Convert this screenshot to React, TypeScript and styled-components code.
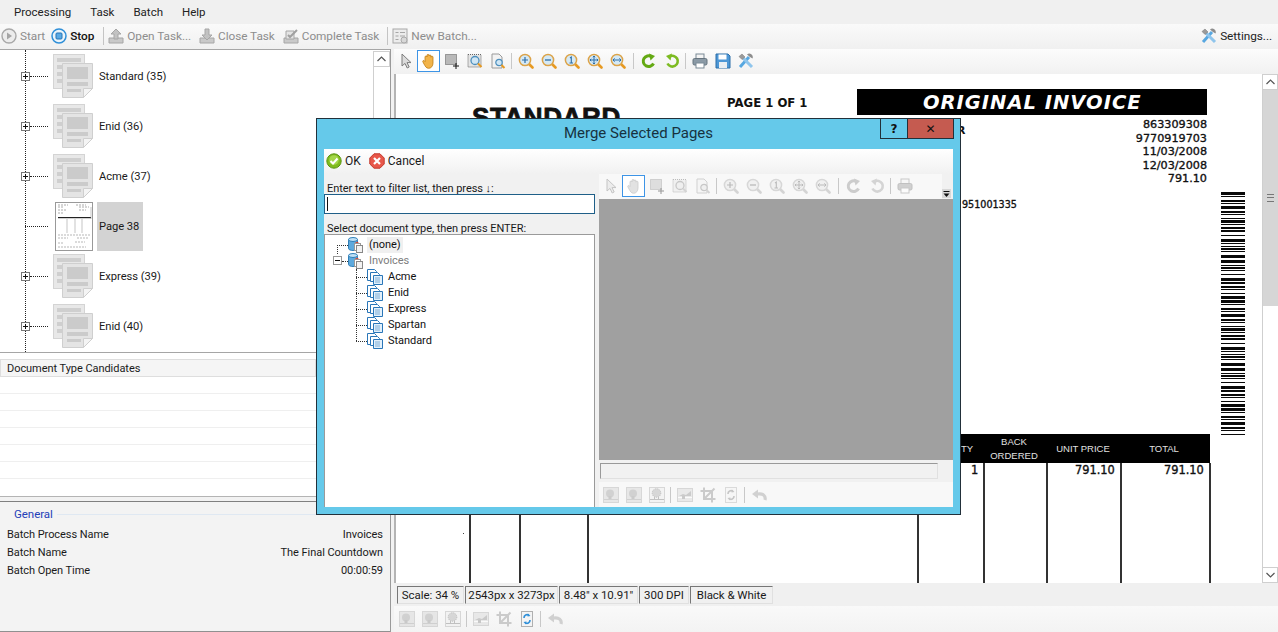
import React from 'react';
import styled, { createGlobalStyle } from 'styled-components';

const GlobalStyle = createGlobalStyle`
  html, body { margin: 0; padding: 0; background: #fff; }
  body { font-family: Roboto, "Liberation Sans", sans-serif; font-size: 11px; letter-spacing: -0.05px; color: #1a1a1a; }
`;

type IconName =
  | 'pointer' | 'hand' | 'select' | 'zoomArea' | 'zoomPage' | 'zoomIn' | 'zoomOut' | 'zoomOne' | 'zoomFit' | 'zoomWidth'
  | 'rotateCw' | 'rotateCcw' | 'print' | 'save' | 'tools' | 'start' | 'stop' | 'openTask' | 'closeTask' | 'completeTask'
  | 'newBatch' | 'ball' | 'ballDots' | 'levels' | 'crop' | 'refreshDoc' | 'undo' | 'ok' | 'cancel';

const Svg = styled.svg<{ $muted?: boolean }>`
  display: block;
  flex: none;
  ${(p) => (p.$muted ? 'filter: grayscale(1) opacity(0.42);' : '')}
`;

const Lens = ({ children }: { children?: React.ReactNode }) => (
  <>
    <line x1="10.5" y1="10.5" x2="14.5" y2="14.5" stroke="#e79a22" strokeWidth="2.6" strokeLinecap="round" />
    <circle cx="7" cy="7" r="5.6" fill="#d4e9f6" stroke="#dca348" strokeWidth="1.5" />
    {children}
  </>
);

const paths: Record<IconName, React.ReactNode> = {
  pointer: <path d="M4 1v12l3-2.6L9.2 15l2-1-2.2-4.4H13z" fill="#dcdcdc" stroke="#7d7d7d" />,
  hand: <path d="M4 8.5V4a1 1 0 0 1 2 0V2.4a1 1 0 0 1 2 0V3a1 1 0 0 1 2 0v1.2a1 1 0 0 1 2 0V10c0 3-1.8 5.300-4.4 5.300C5 15.300 4.200 13 3 11L1.800 8.700c-.5-1 1-1.700 1.600-.8z" fill="#f2b44a" stroke="#c07f17" strokeWidth="0.8" />,
  select: (
    <>
      <rect x="1.5" y="1.5" width="11" height="10" fill="#b9b9b9" stroke="#555" strokeDasharray="1 1" />
      <path d="M12 10v6M9 13h6" stroke="#111" />
    </>
  ),
  zoomArea: (
    <>
      <rect x="1" y="1.5" width="13" height="12.5" fill="#e4e4e4" stroke="#666" strokeDasharray="1 1" />
      <circle cx="8" cy="7.5" r="4" fill="#cfe6f5" stroke="#4d8fbd" strokeWidth="1.3" />
      <line x1="11" y1="10.5" x2="14.5" y2="14" stroke="#e79a22" strokeWidth="2" />
    </>
  ),
  zoomPage: (
    <>
      <path d="M2 1h7l3 3v11H2z" fill="#f2f2f2" stroke="#9a9a9a" />
      <circle cx="9" cy="9.5" r="3.2" fill="#cfe6f5" stroke="#4d8fbd" strokeWidth="1.2" />
      <line x1="11.5" y1="12" x2="14.5" y2="15" stroke="#e79a22" strokeWidth="2" />
    </>
  ),
  zoomIn: <Lens><path d="M4 7h6M7 4v6" stroke="#2c6ea8" strokeWidth="1.2" /></Lens>,
  zoomOut: <Lens><path d="M4 7h6" stroke="#2c6ea8" strokeWidth="1.3" /></Lens>,
  zoomOne: <Lens><path d="M6 5l1.300-1v6M5.500 10h3.500" fill="none" stroke="#2c6ea8" strokeWidth="1.1" /></Lens>,
  zoomFit: <Lens><path d="M7 3v8M3 7h8M5.800 4.200L7 3l1.200 1.200M5.800 9.800L7 11l1.200-1.200M4.200 5.800L3 7l1.200 1.200M9.800 5.800L11 7l-1.200 1.200" fill="none" stroke="#2c6ea8" /></Lens>,
  zoomWidth: <Lens><path d="M3 7h8M4.600 5.300L3 7l1.600 1.700M9.400 5.300L11 7 9.400 8.700" fill="none" stroke="#2c6ea8" /></Lens>,
  rotateCw: (
    <>
      <path d="M12.500 10.500A5.400 5.400 0 1 1 10.500 3.600" fill="none" stroke="#64a913" strokeWidth="3" />
      <path d="M8 0.500l6 2.500-4.500 4.500z" fill="#64a913" />
    </>
  ),
  rotateCcw: (
    <g transform="matrix(-1 0 0 1 16 0)">
      <path d="M12.500 10.500A5.400 5.400 0 1 1 10.500 3.600" fill="none" stroke="#7dbb22" strokeWidth="2.6" />
      <path d="M8 0.500l6 2.500-4.500 4.500z" fill="#7dbb22" />
    </g>
  ),
  print: (
    <>
      <rect x="4" y="1" width="8" height="5" fill="#f4f4f4" stroke="#7a8a96" />
      <rect x="1" y="5.5" width="14" height="6.5" rx="1.5" fill="#8b9aa6" stroke="#66747f" />
      <rect x="4" y="10" width="8" height="5" fill="#fff" stroke="#7a8a96" />
    </>
  ),
  save: (
    <>
      <path d="M1 1h12l2 2v12H1z" fill="#4d97d6" stroke="#2c6ea8" />
      <rect x="3.5" y="1.5" width="8" height="5" fill="#fff" />
      <rect x="4" y="9" width="8" height="6" fill="#e8eef3" />
    </>
  ),
  tools: (
    <>
      <path d="M2 14L11 4" stroke="#57a7e0" strokeWidth="3" />
      <path d="M9 1.500a3.500 3.500 0 0 1 5.500 4L12 4z" fill="#8d8d8d" />
      <path d="M14 14L5 5" stroke="#8fc5ec" strokeWidth="3" />
      <path d="M1 3.500l3-2.500 3 3-3 2.500z" fill="#9a9a9a" stroke="#777" strokeWidth="0.5" />
    </>
  ),
  start: (
    <>
      <circle cx="8" cy="8" r="7" fill="#ececec" stroke="#a8a8a8" strokeWidth="1.4" />
      <path d="M6 4.500L11 8l-5 3.500z" fill="#a5a5a5" />
    </>
  ),
  stop: (
    <>
      <circle cx="8" cy="8" r="7" fill="#eaf4fb" stroke="#2f8fd8" strokeWidth="1.5" />
      <rect x="5" y="5" width="6" height="6" rx="1" fill="#5aa9e4" stroke="#2474b5" />
    </>
  ),
  openTask: (
    <>
      <path d="M1 10h14v5H1z" fill="#c9c9c9" stroke="#a6a6a6" />
      <path d="M8 1l5 5h-3v5H6V6H3z" fill="#c2c2c2" stroke="#a6a6a6" />
    </>
  ),
  closeTask: (
    <>
      <path d="M1 10h14v5H1z" fill="#c9c9c9" stroke="#a6a6a6" />
      <path d="M8 12L3 7h3V1h4v6h3z" fill="#c2c2c2" stroke="#a6a6a6" />
    </>
  ),
  completeTask: (
    <>
      <path d="M1 10h14v5H1z" fill="#c9c9c9" stroke="#a6a6a6" />
      <path d="M3 3h8v8H3z" fill="#e4e4e4" stroke="#a6a6a6" />
      <path d="M5 7l2 2 7-7" fill="none" stroke="#a0a0a0" strokeWidth="2" />
    </>
  ),
  newBatch: (
    <>
      <rect x="1" y="1" width="14" height="14" fill="#ececec" stroke="#a8a8a8" />
      <path d="M3.500 4.500h3M8 4.500h5M3.500 8h3M8 8h5M3.500 11.500h3" stroke="#a6a6a6" />
      <circle cx="12" cy="12" r="3" fill="#d8d8d8" stroke="#aaa" />
    </>
  ),
  ball: (
    <>
      <rect x="0.5" y="0.5" width="15" height="15" fill="#cfcfcf" stroke="#aaa" />
      <circle cx="7" cy="6.5" r="4" fill="#9c9c9c" />
      <rect x="5.5" y="9" width="3" height="4" fill="#8c8c8c" />
      <path d="M1 12.500h14" stroke="#9a9a9a" />
    </>
  ),
  ballDots: (
    <>
      <rect x="0.5" y="0.5" width="15" height="15" fill="#ececec" stroke="#aaa" />
      <circle cx="7.5" cy="6" r="4.3" fill="#aaa" stroke="#666" strokeDasharray="1 1" />
      <path d="M5.500 10v3M9.500 10v3M1 12.500h14" stroke="#777" />
    </>
  ),
  levels: (
    <>
      <rect x="0.5" y="1.5" width="15" height="13" fill="#d4d4d4" stroke="#aaa" />
      <path d="M2 9l4-2 3 1 5-4v5z" fill="#8d8d8d" />
      <path d="M1 10.500h14" stroke="#fff" />
      <rect x="5" y="9" width="3" height="3" fill="#888" />
    </>
  ),
  crop: (
    <path d="M4 0.500V12h11.500M0.500 4H12v11.500M14.500 1.500L4 12" fill="none" stroke="#8e8e8e" strokeWidth="2" />
  ),
  refreshDoc: (
    <>
      <rect x="2.5" y="0.5" width="11" height="15" fill="#f4f4f4" stroke="#b0b0b0" />
      <path d="M5 7a3 3 0 0 1 5-2.500M11 9a3 3 0 0 1-5 2.500" fill="none" stroke="#2f8fd8" strokeWidth="1.6" />
      <path d="M9 2.500l2.500 2.500-3 .5zM7 13.500L4.500 11l3-.5z" fill="#2f8fd8" />
    </>
  ),
  undo: (
    <>
      <path d="M14 13c1-4-2-7-7.500-6" fill="none" stroke="#9c9c9c" strokeWidth="3.2" />
      <path d="M1 7l6-4.500v9z" fill="#9c9c9c" />
    </>
  ),
  ok: (
    <>
      <circle cx="8" cy="8" r="7.2" fill="#7fbb1e" stroke="#5a9412" />
      <circle cx="8" cy="7" r="4.8" fill="#a4d64b" />
      <path d="M4.500 8l2.500 2.500L11.500 5.500" fill="none" stroke="#fff" strokeWidth="2" />
    </>
  ),
  cancel: (
    <>
      <path d="M5 0.800h6L15.200 5v6L11 15.200H5L0.800 11V5z" fill="#e8574a" stroke="#c23a2e" />
      <path d="M5 5l6 6M11 5l-6 6" stroke="#fff" strokeWidth="2.2" />
    </>
  ),
};

const Icon = ({ name, muted }: { name: IconName; muted?: boolean }) => (
  <Svg width={16} height={16} viewBox="0 0 16 16" $muted={muted}>
    {paths[name]}
  </Svg>
);

const Shell = styled.div`
  position: relative;
  width: 1278px;
  height: 632px;
  overflow: hidden;
  background: #f2f2f2;
  display: flex;
  flex-direction: column;
`;

const MenuBar = styled.div`
  height: 24px;
  flex: none;
  display: flex;
  align-items: center;
  gap: 19px;
  padding-left: 14px;
  background: #f0f0f0;
  font-size: 11.5px;
  letter-spacing: 0;
  color: #222;
`;

const MainToolbar = styled.div`
  height: 25px;
  flex: none;
  box-sizing: border-box;
  display: flex;
  align-items: center;
  padding: 0 6px 2px 1px;
  background: linear-gradient(#fafafa, #f0f0f0);
`;

const ToolAction = styled.div<{ $on?: boolean; $after?: number }>`
  display: flex;
  align-items: center;
  gap: 3px;
  margin-right: ${(p) => p.$after ?? 8}px;
  font-size: 11.8px;
  color: ${(p) => (p.$on ? '#111' : '#8d8d8d')};
  font-weight: ${(p) => (p.$on ? 500 : 400)};
`;

const ToolSep = styled.div`
  width: 1px;
  height: 18px;
  flex: none;
  background: #c4c4c4;
  margin: 0 4px 0 0;
`;

const SettingsAction = styled(ToolAction)`
  margin: 0 0 0 auto;
  color: #222;
`;

const Body = styled.div`
  flex: 1;
  display: flex;
  min-height: 0;
`;

const LeftColumn = styled.div`
  width: 390px;
  flex: none;
  display: flex;
  flex-direction: column;
  border-right: 1px solid #9a9a9a;
`;

const TreePanel = styled.div`
  height: 304px;
  flex: none;
  display: flex;
  background: #fff;
  border-top: 1px solid #a6a6a6;
  border-bottom: 1px solid #a6a6a6;
  box-sizing: border-box;
`;

const TreeList = styled.div`
  position: relative;
  flex: 1;
  padding-top: 1px;
  &::before {
    content: '';
    position: absolute;
    left: 25px;
    top: 0;
    bottom: 0;
    border-left: 1px dotted #222;
  }
`;

const TreeRow = styled.div`
  height: 50px;
  display: flex;
  align-items: center;
  padding-left: 21px;
  font-size: 11.2px;
`;

const Expander = styled.div`
  position: relative;
  z-index: 1;
  width: 7px;
  height: 7px;
  border: 1px solid #777;
  background: #fff;
  flex: none;
  &::before { content: ''; position: absolute; left: 1px; right: 1px; top: 3px; height: 1px; background: #111; }
  &::after { content: ''; position: absolute; top: 1px; bottom: 1px; left: 3px; width: 1px; background: #111; }
`;

const Stub = styled.div<{ $wide?: boolean }>`
  width: ${(p) => (p.$wide ? 23 : 18)}px;
  margin-left: ${(p) => (p.$wide ? 4 : 0)}px;
  border-top: 1px dotted #222;
  flex: none;
`;

const ThumbSlot = styled.div`
  width: 46px;
  margin-left: 5px;
  flex: none;
  display: flex;
`;

const PageThumbSlot = styled(ThumbSlot)`
  margin-left: 7px;
  width: 42px;
`;

const TreeLabel = styled.div<{ $selected?: boolean }>`
  height: ${(p) => (p.$selected ? '49px' : 'auto')};
  width: ${(p) => (p.$selected ? '46px' : 'auto')};
  display: flex;
  align-items: center;
  white-space: nowrap;
  background: ${(p) => (p.$selected ? '#d3d3d3' : 'transparent')};
  padding-left: ${(p) => (p.$selected ? '2px' : '0')};
  box-sizing: border-box;
`;

const ScrollTrack = styled.div`
  width: 17px;
  flex: none;
  box-sizing: border-box;
  border-left: 1px solid #cfcfcf;
  display: flex;
  flex-direction: column;
  background: #fff;
`;

const TreeScrollTrack = styled(ScrollTrack)`
  margin-top: 1px;
`;

const ScrollButton = styled.div`
  height: 16px;
  flex: none;
  box-sizing: border-box;
  border: 1px solid #cfcfcf;
  border-left: 0;
  display: flex;
  align-items: center;
  justify-content: center;
  background: #fff;
`;

const ScrollThumb = styled.div`
  height: 216px;
  flex: none;
  background: #d6d6d6;
  display: flex;
  align-items: center;
  justify-content: center;
`;

const Grip = styled.div`
  width: 7px;
  height: 6px;
  border-top: 1px solid #777;
  border-bottom: 1px solid #777;
  position: relative;
  &::after { content: ''; position: absolute; left: 0; right: 0; top: 2px; height: 1px; background: #777; }
`;

const ScrollSpacer = styled.div`
  flex: 1;
`;

const CandidatesPanel = styled.div`
  height: 144px;
  flex: none;
  background: #fff;
  padding-top: 6px;
  box-sizing: border-box;
  border-bottom: 1px solid #b4b4b4;
`;

const CandidatesHeader = styled.div`
  height: 18px;
  width: 316px;
  box-sizing: border-box;
  display: flex;
  align-items: center;
  padding: 1px 0 0 6px;
  background: #f5f5f5;
  border: 1px solid #dedede;
`;

const CandidateRow = styled.div`
  height: 17px;
  box-sizing: border-box;
  border-bottom: 1px solid #efefef;
`;

const GeneralPanel = styled.div`
  flex: 1;
  margin-top: 4px;
  background: #f3f3f3;
  border-top: 1px solid #808080;
  border-bottom: 1px solid #909090;
  padding: 3px 7px 0;
`;

const SectionTitle = styled.div`
  height: 18px;
  display: flex;
  align-items: center;
  gap: 4px;
  padding-left: 7px;
  margin-bottom: 2px;
  color: #2440b8;
  font-size: 11.5px;
  &::after { content: ''; flex: 1; height: 1px; background: #dfe8f2; }
`;

const PropRow = styled.div`
  height: 18px;
  display: flex;
  align-items: center;
  justify-content: space-between;
`;

const RightColumn = styled.div`
  flex: 1;
  min-width: 0;
  display: flex;
  flex-direction: column;
  padding-left: 3px;
`;

const IconBar = styled.div`
  flex: none;
  display: flex;
  align-items: center;
  background: linear-gradient(#fcfcfc, #f1f1f1);
`;

const ViewerBar = styled(IconBar)`
  height: 25px;
  box-sizing: border-box;
  padding-top: 1px;
  align-items: flex-start;
`;

const BottomBar = styled(IconBar)`
  height: 26px;
  padding-left: 1px;
  background: linear-gradient(#f9f9f9, #f3f3f3);
`;

const IconSlot = styled.div<{ $active?: boolean }>`
  width: 23px;
  height: 22px;
  flex: none;
  box-sizing: border-box;
  display: flex;
  align-items: center;
  justify-content: center;
  border: 1px solid ${(p) => (p.$active ? '#3d94e6' : 'transparent')};
  background: ${(p) => (p.$active ? '#fff' : 'transparent')};
`;

const IconSep = styled.div<{ $wide?: boolean }>`
  width: 1px;
  height: 16px;
  margin: ${(p) => (p.$wide ? '3px 3.5px' : '3px 2px')};
  flex: none;
  background: #c8c8c8;
`;

const ViewerRow = styled.div`
  flex: 1;
  min-height: 0;
  display: flex;
  border-left: 2px solid #b4b4b4;
`;

const DocCanvas = styled.div`
  position: relative;
  flex: 1;
  overflow: hidden;
  background: #fff;
  color: #111;
  letter-spacing: 0;
  font-family: "DejaVu Sans", sans-serif;
`;

const DocText = styled.div<{ $x: number; $y: number; $size: number }>`
  position: absolute;
  left: ${(p) => p.$x}px;
  top: ${(p) => p.$y}px;
  font-size: ${(p) => p.$size}px;
  line-height: 1;
  white-space: nowrap;
  -webkit-text-stroke: 0.35px #111;
`;

const DocTitle = styled(DocText)`
  font-family: "Liberation Sans", sans-serif;
  font-weight: 700;
  letter-spacing: 0.6px;
  -webkit-text-stroke: 0.8px #111;
`;

const DocCaption = styled(DocText)`
  font-weight: 700;
  -webkit-text-stroke: 0;
`;

const InvoiceBanner = styled.div`
  position: absolute;
  left: 461px;
  top: 15px;
  width: 350px;
  height: 26px;
  background: #000;
  color: #fff;
  font-size: 19.5px;
  font-weight: 700;
  font-style: italic;
  letter-spacing: 1px;
  display: flex;
  align-items: center;
  padding-left: 66px;
  box-sizing: border-box;
`;

const DocNumbers = styled.div`
  position: absolute;
  left: 691px;
  top: 44px;
  width: 120px;
  text-align: right;
  font-size: 11.2px;
  line-height: 13.5px;
  -webkit-text-stroke: 0.35px #111;
`;

const TableHead = styled.div`
  position: absolute;
  left: 560px;
  top: 360px;
  width: 254px;
  height: 29px;
  background: #000;
  color: #e0e0e0;
  font-family: "Liberation Sans", sans-serif;
  font-size: 9.5px;
  line-height: 14px;
  text-align: center;
`;

const HeadCell = styled.div<{ $x: number; $w: number }>`
  position: absolute;
  left: ${(p) => p.$x}px;
  width: ${(p) => p.$w}px;
  top: 0;
  bottom: 0;
  display: flex;
  align-items: center;
  justify-content: center;
`;

const RuleLine = styled.div<{ $x: number; $y: number }>`
  position: absolute;
  left: ${(p) => p.$x}px;
  top: ${(p) => p.$y}px;
  bottom: 0;
  width: 2px;
  background: #333;
`;

const ViewerScroll = styled(ScrollTrack)`
  width: 16px;
`;

const StatusBar = styled.div`
  height: 23px;
  flex: none;
  display: flex;
  align-items: center;
  padding-left: 3px;
  gap: 1px;
  background: #f0f0f0;
  font-size: 11.5px;
`;

const StatusCell = styled.div<{ $w: number }>`
  width: ${(p) => p.$w}px;
  height: 18px;
  box-sizing: border-box;
  display: flex;
  align-items: center;
  justify-content: center;
  white-space: nowrap;
  border: 1px solid #e0e0e0;
  border-left-color: #777;
  border-top-color: #777;
`;

const Dialog = styled.div`
  position: absolute;
  left: 316px;
  top: 118px;
  width: 645px;
  height: 397px;
  box-sizing: border-box;
  border: 1px solid #22303a;
  background: #65c9ea;
  display: flex;
  flex-direction: column;
  padding: 0 7px 7px;
`;

const TitleBar = styled.div`
  position: relative;
  height: 30px;
  flex: none;
  box-sizing: border-box;
  display: flex;
  align-items: center;
  justify-content: center;
  font-size: 15px;
  letter-spacing: 0;
  color: #17323f;
  padding-bottom: 2px;
`;

const CaptionButtons = styled.div`
  position: absolute;
  right: -1px;
  top: 0;
  display: flex;
`;

const CaptionButton = styled.div<{ $close?: boolean }>`
  width: ${(p) => (p.$close ? 46 : 28)}px;
  height: 20px;
  box-sizing: border-box;
  border: 1px solid #22303a;
  border-top: 0;
  border-left-width: ${(p) => (p.$close ? 0 : 1)}px;
  background: ${(p) => (p.$close ? '#c55b50' : 'transparent')};
  display: flex;
  align-items: center;
  justify-content: center;
  font-family: "DejaVu Sans", sans-serif;
  font-size: 12px;
  font-weight: 700;
  color: #111;
`;

const DialogClient = styled.div`
  flex: 1;
  min-height: 0;
  background: #f1f1f1;
  display: flex;
  flex-direction: column;
`;

const DialogActions = styled.div`
  height: 25px;
  flex: none;
  box-sizing: border-box;
  display: flex;
  align-items: center;
  gap: 8px;
  padding: 0 0 2px 2px;
  background: linear-gradient(#fff, #f1f1f1);
  font-size: 12px;
  letter-spacing: 0;
`;

const DialogAction = styled.div`
  display: flex;
  align-items: center;
  gap: 3px;
`;

const DialogColumns = styled.div`
  flex: 1;
  min-height: 0;
  display: flex;
`;

const DialogLeft = styled.div`
  width: 271px;
  flex: none;
  display: flex;
  flex-direction: column;
`;

const FieldLabel = styled.div`
  height: 20px;
  flex: none;
  display: flex;
  align-items: flex-end;
  padding-left: 3px;
  line-height: 11px;
`;

const FilterInput = styled.div`
  height: 20px;
  flex: none;
  box-sizing: border-box;
  border: 1px solid #1f5f88;
  background: #fff;
  padding: 2px;
  &::before { content: ''; display: block; width: 1px; height: 14px; background: #111; }
`;

const TypeTree = styled.div`
  flex: 1;
  box-sizing: border-box;
  border: 1px solid #9a9a9a;
  border-bottom: 0;
  background: #fff;
  padding-top: 2px;
`;

const TypeRow = styled.div<{ $indent: number }>`
  position: relative;
  height: 16px;
  display: flex;
  align-items: center;
  padding-left: ${(p) => p.$indent}px;
  white-space: nowrap;
`;

const TypeLabel = styled.div<{ $dim?: boolean; $hover?: boolean; $gap: number }>`
  margin-left: ${(p) => p.$gap}px;
  padding: 0 2px;
  height: 16px;
  line-height: 16px;
  color: ${(p) => (p.$dim ? '#7d7d7d' : '#111')};
  background: ${(p) => (p.$hover ? '#f0f0f0' : 'transparent')};
`;

const Guide = styled.div<{ $x: number; $y: number; $w?: number; $h?: number }>`
  position: absolute;
  left: ${(p) => p.$x}px;
  top: ${(p) => p.$y}px;
  ${(p) => (p.$w ? `width: ${p.$w}px; border-top: 1px dotted #333;` : '')}
  ${(p) => (p.$h ? `height: ${p.$h}px; border-left: 1px dotted #333;` : '')}
`;

const CollapseBox = styled(Expander)`
  position: absolute;
  left: 8px;
  top: 3px;
  border-color: #999;
  &::after { display: none; }
`;

const DialogRight = styled.div`
  flex: 1;
  min-width: 0;
  display: flex;
  flex-direction: column;
  padding-left: 4px;
`;

const PreviewBarRow = styled.div`
  height: 25px;
  flex: none;
  display: flex;
  align-items: stretch;
`;

const PreviewBar = styled(IconBar)`
  flex: 1;
  box-sizing: border-box;
  padding-top: 1px;
  align-items: flex-start;
  background: #f8f8f8;
`;

const Overflow = styled.div`
  width: 11px;
  flex: none;
  background: #f1f1f1;
  display: flex;
  align-items: flex-end;
  padding-bottom: 1px;
`;

const PreviewPane = styled.div`
  flex: 1;
  min-height: 0;
  background: #a0a0a0;
`;

const PreviewStatus = styled.div`
  height: 22px;
  flex: none;
  padding: 3px 15px 3px 1px;
  box-sizing: border-box;
  &::before {
    content: '';
    display: block;
    height: 16px;
    box-sizing: border-box;
    border: 1px solid #e0e0e0;
    border-left-color: #999;
    border-top-color: #999;
  }
`;

const PreviewTools = styled(IconBar)`
  height: 25px;
  background: #f8f8f8;
`;

const Chevron = ({ up }: { up?: boolean }) => (
  <Svg width={9} height={6} viewBox="0 0 9 6">
    <path d={up ? 'M0.5 5L4.5 1l4 4' : 'M0.5 1l4 4 4-4'} fill="none" stroke="#555" strokeWidth="1.2" />
  </Svg>
);

const OverflowGlyph = () => (
  <Svg width={9} height={9} viewBox="0 0 9 9">
    <rect width="9" height="9" fill="#d8d8d8" />
    <path d="M1.5 2.5h6" stroke="#111" />
    <path d="M1.5 4.5h6L4.5 8z" fill="#111" />
  </Svg>
);

const StackIcon = () => (
  <Svg width={40} height={44} viewBox="0 0 40 44">
    <rect x="0.5" y="0.5" width="31" height="34" fill="#e8e8e8" stroke="#d4d4d4" />
    <path d="M4 4h24v4H4zM4 11h5v4H4zM4 18h5v4H4zM4 25h5v4H4z" fill="#cfcfcf" />
    <path d="M9.5 9.5h30v25l-9 9h-21z" fill="#e4e4e4" stroke="#cfcfcf" />
    <path d="M14 13h21v12H14zM14 28h21v4H14zM14 35h14v3H14z" fill="#cbcbcb" />
    <path d="M30.5 43.5v-9h9z" fill="#f4f4f4" stroke="#cfcfcf" />
  </Svg>
);

const PageThumb = () => (
  <Svg width={38} height={49} viewBox="0 0 38 49">
    <rect x="0.5" y="0.5" width="37" height="48" fill="#fff" stroke="#999" />
    <path d="M3 3h10M3 5h6M3 8h8M3 11h6M21 3h10M24 5h10M24 8h7" stroke="#888" strokeWidth="0.7" strokeDasharray="2 1" />
    <rect x="3" y="15" width="33" height="1.2" fill="#222" />
    <path d="M12 17v14M20 17v14M27 17v14M36 5v12" stroke="#888" strokeWidth="0.5" />
    <path d="M3 33h33M3 36h10M22 36h12M3 41h6M20 40h10M3 45h28" stroke="#999" strokeWidth="0.7" strokeDasharray="2 1" />
  </Svg>
);

const DbIcon = () => (
  <Svg width={15} height={16} viewBox="0 0 15 16">
    <path d="M0.5 2.5v9c0 1 2 2 4.500 2s4.500-1 4.500-2v-9" fill="#5da9dd" stroke="#2f7fb8" />
    <ellipse cx="5" cy="2.5" rx="4.5" ry="2" fill="#bfe0f5" stroke="#2f7fb8" />
    <path d="M7 6l2-1.500L11 6z" fill="#d84a3a" />
    <rect x="6.5" y="6.5" width="6" height="7" fill="#fff" stroke="#999" />
    <rect x="8.5" y="8.5" width="6" height="7" fill="#f2f2f2" stroke="#888" />
  </Svg>
);

const DocsIcon = () => (
  <Svg width={16} height={16} viewBox="0 0 16 16">
    <path d="M0.5 0.5h7l2 2v9h-9z" fill="#fff" stroke="#2a76b8" />
    <path d="M3.5 3.5h7l2 2v7h-9z" fill="#fff" stroke="#2a76b8" />
    <path d="M6.5 6.5h9v9h-9z" fill="#e2f0fb" stroke="#2a76b8" />
    <path d="M8 9h5M8 11h5M8 13h5" stroke="#7eaed6" />
  </Svg>
);

// rough scanline pattern of the stripe printed on the right side of the page
const barHeights = [3, 1, 2, 1, 3, 2, 1, 1, 3, 1, 2, 2, 1, 3, 1, 1, 2, 1, 3, 3, 1, 2, 1, 1, 3, 2, 2, 1, 1, 3];

const BarcodeSvg = styled.svg`
  position: absolute;
  left: 825px;
  top: 118px;
`;

const Barcode = () => {
  const bars: React.ReactElement[] = [];
  let y = 0;
  let i = 0;
  while (y < 243) {
    const h = barHeights[i % barHeights.length];
    bars.push(<rect key={i} x="0" y={y} width="24" height={h} fill="#0a0a0a" />);
    y += h + barHeights[(i + 7) % barHeights.length];
    i += 1;
  }
  return (
    <BarcodeSvg width={24} height={243} viewBox="0 0 24 243">
      {bars}
    </BarcodeSvg>
  );
};

const DocMark = styled.div`
  position: absolute;
  left: 67px;
  top: 459px;
  width: 1px;
  height: 1px;
  background: #444;
`;

const IconGroup = ({ groups, muted, active }: { groups: IconName[][]; muted?: boolean; active?: IconName }) => (
  <>
    {groups.map((group, i) => (
      <React.Fragment key={i}>
        {i > 0 && <IconSep $wide={i === 2} />}
        {group.map((name) => (
          <IconSlot key={name} $active={name === active}>
            <Icon name={name} muted={muted} />
          </IconSlot>
        ))}
      </React.Fragment>
    ))}
  </>
);

const viewerGroups: IconName[][] = [
  ['pointer', 'hand', 'select', 'zoomArea', 'zoomPage'],
  ['zoomIn', 'zoomOut', 'zoomOne', 'zoomFit', 'zoomWidth'],
  ['rotateCw', 'rotateCcw'],
  ['print', 'save', 'tools'],
];

const previewGroups: IconName[][] = [
  ['pointer', 'hand', 'select', 'zoomArea', 'zoomPage'],
  ['zoomIn', 'zoomOut', 'zoomOne', 'zoomFit', 'zoomWidth'],
  ['rotateCw', 'rotateCcw'],
  ['print'],
];

const EditTools = ({ live }: { live?: boolean }) => (
  <>
    <IconSlot><Icon name="ball" muted /></IconSlot>
    <IconSlot><Icon name="ball" muted /></IconSlot>
    <IconSlot><Icon name="ballDots" muted /></IconSlot>
    <IconSep />
    <IconSlot><Icon name="levels" muted /></IconSlot>
    <IconSlot><Icon name="crop" muted /></IconSlot>
    <IconSlot><Icon name="refreshDoc" muted={!live} /></IconSlot>
    <IconSep />
    <IconSlot><Icon name="undo" muted /></IconSlot>
  </>
);

const treeRows = [
  { label: 'Standard (35)' },
  { label: 'Enid (36)' },
  { label: 'Acme (37)' },
  { label: 'Page 38', page: true },
  { label: 'Express (39)' },
  { label: 'Enid (40)' },
];

const docTypes = ['Acme', 'Enid', 'Express', 'Spartan', 'Standard'];

const props = [
  ['Batch Process Name', 'Invoices'],
  ['Batch Name', 'The Final Countdown'],
  ['Batch Open Time', '00:00:59'],
];

const statusCells: [string, number][] = [
  ['Scale: 34 %', 67],
  ['2543px x 3273px', 93],
  ['8.48" x 10.91"', 79],
  ['300 DPI', 50],
  ['Black & White', 83],
];

const App: React.FC = () => {
  return (
    <Shell>
      <GlobalStyle />
      <MenuBar>
        <span>Processing</span>
        <span>Task</span>
        <span>Batch</span>
        <span>Help</span>
      </MenuBar>
      <MainToolbar>
        <ToolAction $after={6}><Icon name="start" />Start</ToolAction>
        <ToolAction $on $after={9}><Icon name="stop" />Stop</ToolAction>
        <ToolSep />
        <ToolAction><Icon name="openTask" />Open Task...</ToolAction>
        <ToolAction><Icon name="closeTask" />Close Task</ToolAction>
        <ToolAction><Icon name="completeTask" />Complete Task</ToolAction>
        <ToolSep />
        <ToolAction><Icon name="newBatch" />New Batch...</ToolAction>
        <SettingsAction><Icon name="tools" />Settings...</SettingsAction>
      </MainToolbar>
      <Body>
        <LeftColumn>
          <TreePanel>
            <TreeList>
              {treeRows.map((row) => (
                <TreeRow key={row.label}>
                  {row.page ? <Stub $wide /> : <Expander />}
                  {!row.page && <Stub />}
                  {row.page ? (
                    <PageThumbSlot><PageThumb /></PageThumbSlot>
                  ) : (
                    <ThumbSlot><StackIcon /></ThumbSlot>
                  )}
                  <TreeLabel $selected={row.page}>{row.label}</TreeLabel>
                </TreeRow>
              ))}
            </TreeList>
            <TreeScrollTrack>
              <ScrollButton><Chevron up /></ScrollButton>
            </TreeScrollTrack>
          </TreePanel>
          <CandidatesPanel>
            <CandidatesHeader>Document Type Candidates</CandidatesHeader>
            <CandidateRow />
            <CandidateRow />
            <CandidateRow />
            <CandidateRow />
            <CandidateRow />
            <CandidateRow />
          </CandidatesPanel>
          <GeneralPanel>
            <SectionTitle>General</SectionTitle>
            {props.map(([name, value]) => (
              <PropRow key={name}>
                <span>{name}</span>
                <span>{value}</span>
              </PropRow>
            ))}
          </GeneralPanel>
        </LeftColumn>
        <RightColumn>
          <ViewerBar>
            <IconGroup groups={viewerGroups} active="hand" />
          </ViewerBar>
          <ViewerRow>
            <DocCanvas>
              <DocTitle $x={76} $y={30} $size={26}>STANDARD</DocTitle>
              <DocCaption $x={331} $y={24} $size={11.7}>PAGE 1 OF 1</DocCaption>
              <InvoiceBanner>ORIGINAL INVOICE</InvoiceBanner>
              <DocNumbers>
                863309308<br />9770919703<br />11/03/2008<br />12/03/2008<br />791.10
              </DocNumbers>
              <DocCaption $x={561} $y={51} $size={11}>R</DocCaption>
              <DocText $x={566} $y={126} $size={9.6}>951001335</DocText>
              <Barcode />
              <TableHead>
                <HeadCell $x={5} $w={12}>TY</HeadCell>
                <HeadCell $x={27} $w={62}>BACK<br />ORDERED</HeadCell>
                <HeadCell $x={91} $w={72}>UNIT PRICE</HeadCell>
                <HeadCell $x={164} $w={88}>TOTAL</HeadCell>
              </TableHead>
              <DocText $x={575} $y={391} $size={11.4}>1</DocText>
              <DocText $x={679} $y={391} $size={11.4}>791.10</DocText>
              <DocText $x={768} $y={391} $size={11.4}>791.10</DocText>
              <RuleLine $x={587} $y={389} />
              <RuleLine $x={650} $y={389} />
              <RuleLine $x={724} $y={389} />
              <RuleLine $x={813} $y={389} />
              <RuleLine $x={73} $y={400} />
              <RuleLine $x={123} $y={400} />
              <RuleLine $x={191} $y={400} />
              <RuleLine $x={521} $y={400} />
              <DocMark />
            </DocCanvas>
            <ViewerScroll>
              <ScrollButton><Chevron up /></ScrollButton>
              <ScrollThumb><Grip /></ScrollThumb>
              <ScrollSpacer />
              <ScrollButton><Chevron /></ScrollButton>
            </ViewerScroll>
          </ViewerRow>
          <StatusBar>
            {statusCells.map(([text, w]) => (
              <StatusCell key={text} $w={w}>{text}</StatusCell>
            ))}
          </StatusBar>
          <BottomBar>
            <EditTools live />
          </BottomBar>
        </RightColumn>
      </Body>

      <Dialog>
        <TitleBar>
          Merge Selected Pages
          <CaptionButtons>
            <CaptionButton>?</CaptionButton>
            <CaptionButton $close>✕</CaptionButton>
          </CaptionButtons>
        </TitleBar>
        <DialogClient>
          <DialogActions>
            <DialogAction><Icon name="ok" />OK</DialogAction>
            <DialogAction><Icon name="cancel" />Cancel</DialogAction>
          </DialogActions>
          <DialogColumns>
            <DialogLeft>
              <FieldLabel>Enter text to filter list, then press ↓:</FieldLabel>
              <FilterInput />
              <FieldLabel>Select document type, then press ENTER:</FieldLabel>
              <TypeTree>
                <TypeRow $indent={23}>
                  <Guide $x={12} $y={8} $w={11} />
                  <Guide $x={12} $y={8} $h={9} />
                  <DbIcon />
                  <TypeLabel $hover $gap={4}>(none)</TypeLabel>
                </TypeRow>
                <TypeRow $indent={23}>
                  <Guide $x={17} $y={8} $w={6} />
                  <CollapseBox />
                  <DbIcon />
                  <TypeLabel $dim $gap={4}>Invoices</TypeLabel>
                </TypeRow>
                {docTypes.map((name, i) => (
                  <TypeRow key={name} $indent={42}>
                    <Guide $x={31} $y={i === 0 ? 0 : -8} $h={i === 0 ? 8 : 16} />
                    <Guide $x={31} $y={8} $w={11} />
                    <DocsIcon />
                    <TypeLabel $gap={3}>{name}</TypeLabel>
                  </TypeRow>
                ))}
              </TypeTree>
            </DialogLeft>
            <DialogRight>
              <PreviewBarRow>
                <PreviewBar>
                  <IconGroup groups={previewGroups} muted active="hand" />
                </PreviewBar>
                <Overflow><OverflowGlyph /></Overflow>
              </PreviewBarRow>
              <PreviewPane />
              <PreviewStatus />
              <PreviewTools>
                <EditTools />
              </PreviewTools>
            </DialogRight>
          </DialogColumns>
        </DialogClient>
      </Dialog>
    </Shell>
  );
};

export default App;
